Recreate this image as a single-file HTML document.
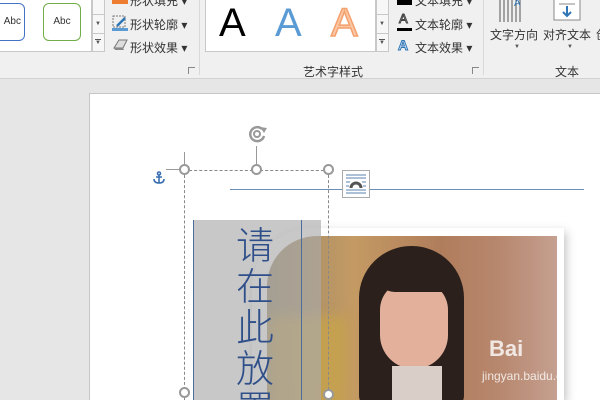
<!DOCTYPE html>
<html style="width:600px;height:400px;overflow:hidden"><head><meta charset="utf-8"><style>
*{margin:0;padding:0;box-sizing:border-box}
body{width:600px;height:400px;overflow:hidden;background:#e6e6e6;position:relative;font-family:"Liberation Sans","Noto Sans CJK SC",sans-serif;}
.a{position:absolute}
.cn{font-family:"Liberation Sans","Noto Sans CJK SC",sans-serif;font-size:12px;color:#333;white-space:nowrap}
</style></head><body>
<div class="a" style="left:0;top:0;width:600px;height:79px;background:#f0f0f0;border-bottom:1px solid #d2d2d2"></div>
<div class="a" style="left:0;top:0;width:92px;height:52px;background:#fff;border:1px solid #c8c8c8;border-top:none;border-left:none"></div>
<div class="a" style="left:-14px;top:3px;width:39px;height:38px;border:1px solid #4472c4;border-radius:6px;font-size:10px;text-align:right;padding:12px 3px 0 0;color:#333">Abc</div>
<div class="a" style="left:43px;top:3px;width:38px;height:38px;border:1px solid #70ad47;border-radius:6px;font-size:10px;text-align:center;padding-top:12px;color:#333">Abc</div>
<div class="a" style="left:92px;top:0;width:13px;height:52px;background:#f7f7f7;border:1px solid #c8c8c8;border-top:none"></div>
<div class="a" style="left:92px;top:14px;width:13px;height:1px;background:#c8c8c8"></div>
<div class="a" style="left:92px;top:33px;width:13px;height:1px;background:#c8c8c8"></div>
<div class="a" style="left:95px;top:21px;font-size:6px;color:#555">▼</div>
<div class="a" style="left:95px;top:39px;font-size:6px;color:#555;border-top:1px solid #555;line-height:6px">▼</div>
<div class="a" style="left:112px;top:0;width:16px;height:4px;background:#ed7d31"></div>
<div class="a cn" style="left:130px;top:-8px">形状填充 ▾</div>
<svg class="a" style="left:112px;top:15px" width="16" height="16"><rect x="1" y="1" width="12" height="11" fill="none" stroke="#777" stroke-dasharray="2 1"/><path d="M5 11 L13 3" stroke="#2e75b6" stroke-width="2.5"/><rect x="0" y="13" width="16" height="3" fill="#5b9bd5"/></svg>
<div class="a cn" style="left:130px;top:16px">形状轮廓 ▾</div>
<svg class="a" style="left:112px;top:38px" width="16" height="14"><path d="M2 10 L7 2 H15 L11 10 Z" fill="#ddd" stroke="#777"/><path d="M2 10 L11 10 L12 12 H3 Z" fill="#888"/></svg>
<div class="a cn" style="left:130px;top:39px">形状效果 ▾</div>
<div class="a" style="left:188px;top:67px;width:7px;height:7px;border-left:1px solid #888;border-top:1px solid #888"></div>
<div class="a" style="left:199px;top:0;width:1px;height:75px;background:#d8d8d8"></div>
<div class="a" style="left:205px;top:0;width:171px;height:52px;background:#fff;border:1px solid #c8c8c8;border-top:none"></div>
<div class="a" style="left:219px;top:0;font-size:40px;line-height:46px;color:#000">A</div>
<div class="a" style="left:275px;top:0;font-size:40px;line-height:46px;color:#5b9bd5">A</div>
<div class="a" style="left:331px;top:0;font-size:40px;line-height:46px;color:#fbc7a4;-webkit-text-stroke:1.5px #f4a06c">A</div>
<div class="a" style="left:376px;top:0;width:13px;height:52px;background:#f7f7f7;border:1px solid #c8c8c8;border-top:none"></div>
<div class="a" style="left:376px;top:14px;width:13px;height:1px;background:#c8c8c8"></div>
<div class="a" style="left:376px;top:33px;width:13px;height:1px;background:#c8c8c8"></div>
<div class="a" style="left:379px;top:21px;font-size:6px;color:#555">▼</div>
<div class="a" style="left:379px;top:39px;font-size:6px;color:#555;border-top:1px solid #555;line-height:6px">▼</div>
<div class="a" style="left:397px;top:0;width:15px;height:5px;background:#000"></div>
<div class="a cn" style="left:415px;top:-8px">文本填充 ▾</div>
<div class="a" style="left:399px;top:12px;font-size:13px;color:#fff;-webkit-text-stroke:1px #444;line-height:14px">A</div>
<div class="a" style="left:397px;top:28px;width:15px;height:3px;background:#000"></div>
<div class="a cn" style="left:415px;top:16px">文本轮廓 ▾</div>
<div class="a" style="left:398px;top:37px;font-size:14px;font-weight:bold;color:#dbe8f6;-webkit-text-stroke:1px #2e75b6;line-height:16px">A</div>
<div class="a cn" style="left:415px;top:39px">文本效果 ▾</div>
<div class="a cn" style="left:303px;top:63px">艺术字样式</div>
<div class="a" style="left:472px;top:67px;width:7px;height:7px;border-left:1px solid #888;border-top:1px solid #888"></div>
<div class="a" style="left:483px;top:0;width:1px;height:75px;background:#d8d8d8"></div>
<svg class="a" style="left:497px;top:0" width="32" height="26"><g stroke="#555"><path d="M3 0V22M7 0V22M11 0V22M15 0V22M19 0V22M23 0V22"/></g><text x="17" y="6" font-size="10" fill="#2e75b6" font-family="Liberation Sans">A</text></svg>
<div class="a cn" style="left:490px;top:26px">文字方向</div>
<div class="a" style="left:514px;top:44px;font-size:6px;color:#555">▼</div>
<svg class="a" style="left:553px;top:0" width="28" height="22"><rect x="1" y="-2" width="26" height="22" fill="#fff" stroke="#888"/><path d="M14 6V16M10 12L14 16L18 12" stroke="#2e75b6" stroke-width="2" fill="none"/><path d="M6 4H22" stroke="#888"/></svg>
<div class="a cn" style="left:543px;top:26px">对齐文本</div>
<div class="a cn" style="left:596px;top:26px">创</div>
<div class="a" style="left:567px;top:44px;font-size:6px;color:#555">▼</div>
<div class="a cn" style="left:555px;top:63px">文本</div>
<div class="a" style="left:89px;top:93px;width:511px;height:307px;background:#fff;border-left:1px solid #c6c6c6;border-top:1px solid #c6c6c6"></div>
<div class="a" style="left:230px;top:189px;width:354px;height:1px;background:#6d8fb4"></div>
<div class="a" style="left:342px;top:170px;width:28px;height:28px;background:#fff;border:1px solid #aaa"></div>
<svg class="a" style="left:345px;top:174px" width="22" height="20"><g stroke="#5a82b4"><path d="M1 1H21M1 4H21M1 16H21M1 19H21M1 8H5M17 8H21M1 12H4M18 12H21"/></g><path d="M6 14 A5 5 0 0 1 16 14" stroke="#555" stroke-width="3" fill="none"/></svg>
<div class="a" style="left:252px;top:228px;width:312px;height:172px;background:#fff;box-shadow:2px 4px 10px rgba(0,0,0,.25);border-radius:60px 0 0 0"></div>
<div class="a" style="left:267px;top:236px;width:290px;height:164px;border-radius:50px 0 0 0;overflow:hidden;background:linear-gradient(90deg,#9a8a6a 0%,#c49a63 30%,#b07d5c 60%,#b7876e 80%,#c5a090 100%)">
 <div class="a" style="left:0;top:80px;width:80px;height:100px;background:#c9a548;opacity:.7;filter:blur(6px)"></div>
 <div class="a" style="left:92px;top:10px;width:105px;height:160px;background:#2b201c;border-radius:52px 52px 10px 10px"></div>
 <div class="a" style="left:113px;top:45px;width:68px;height:88px;background:#e3b09c;border-radius:34px 34px 40px 40px"></div>
 <div class="a" style="left:110px;top:18px;width:72px;height:38px;background:#2b201c;border-radius:35px 35px 10px 30px"></div>
 <div class="a" style="left:125px;top:130px;width:50px;height:40px;background:#d9cfc8"></div>
 <div class="a" style="left:222px;top:100px;font:bold 22px 'Liberation Sans';color:rgba(255,255,255,.8)">Bai</div>
 <div class="a" style="left:215px;top:133px;font:12px 'Liberation Sans';color:rgba(255,255,255,.8)">jingyan.baidu.com</div>
</div>
<div class="a" style="left:193px;top:220px;width:128px;height:180px;background:rgba(170,170,170,.65)"></div>
<div class="a" style="left:193px;top:220px;width:1px;height:180px;background:#4a6e9c"></div>
<div class="a" style="left:301px;top:220px;width:1px;height:180px;background:#4a6e9c"></div>
<div class="a" style="left:236px;top:222px;width:40px;height:178px;overflow:hidden;font-size:38px;line-height:41px;color:#2f4f8a;font-family:'Noto Sans CJK SC',sans-serif;font-weight:300">请<br>在<br>此<br>放<br>置</div>
<div class="a" style="left:184px;top:170px;width:145px;height:230px;border:1px dashed #888;border-bottom:none"></div>
<div class="a" style="left:166px;top:169px;width:14px;height:1px;background:#999"></div>
<div class="a" style="left:184px;top:152px;width:1px;height:14px;background:#999"></div>
<div class="a" style="left:256px;top:146px;width:1px;height:20px;background:#999"></div>
<div class="a" style="left:179px;top:164px;width:11px;height:11px;border:2px solid #999;border-radius:50%;background:#fff"></div>
<div class="a" style="left:251px;top:164px;width:11px;height:11px;border:2px solid #999;border-radius:50%;background:#fff"></div>
<div class="a" style="left:323px;top:164px;width:11px;height:11px;border:2px solid #999;border-radius:50%;background:#fff"></div>
<div class="a" style="left:179px;top:387px;width:11px;height:11px;border:2px solid #999;border-radius:50%;background:#fff"></div>
<div class="a" style="left:323px;top:389px;width:11px;height:11px;border:2px solid #999;border-radius:50%;background:#fff"></div>
<svg class="a" style="left:247px;top:124px" width="24" height="22"><path d="M15 5 A7 7 0 1 0 17 12" stroke="#999" stroke-width="2.5" fill="none"/><circle cx="10" cy="10" r="3" stroke="#999" stroke-width="2" fill="none"/><path d="M13 3 L20 4 L17 9" fill="#999"/></svg>
<svg class="a" style="left:152px;top:171px" width="14" height="14"><g stroke="#3a6fb0" stroke-width="1.6" fill="none"><circle cx="7" cy="2.5" r="1.5"/><path d="M7 4V12M2 8Q2 12 7 12Q12 12 12 8M4 6H10"/></g></svg>
</body></html>
